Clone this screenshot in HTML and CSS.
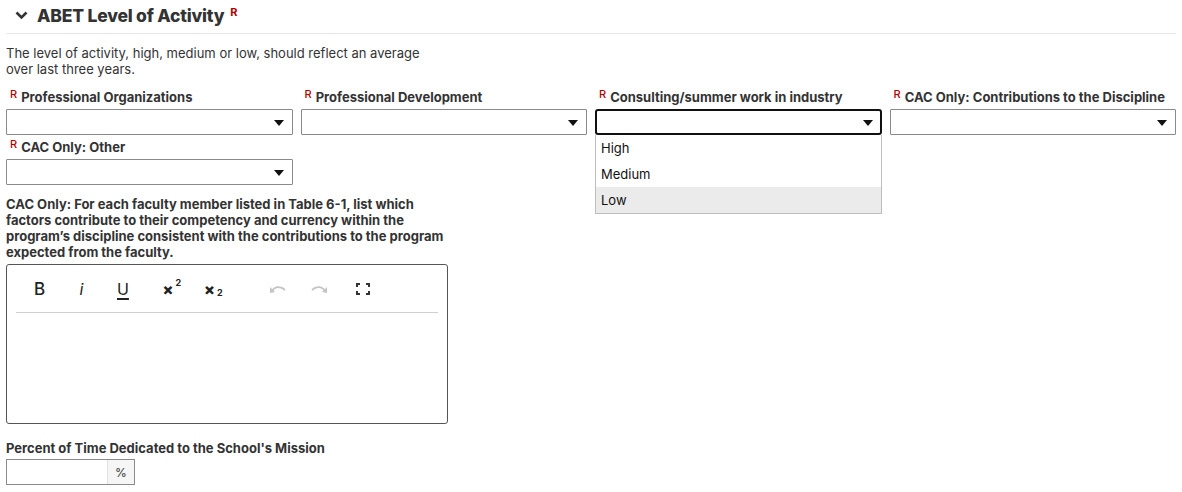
FILE: index.html
```html
<!DOCTYPE html>
<html>
<head>
<meta charset="utf-8">
<link rel="stylesheet" href="styles.css">
</head>
<body>
<div class="page">
  <div class="section-head">
    <svg class="chev" width="13" height="9" viewBox="0 0 13 9"><path d="M1.5 1.5 L6.5 6.5 L11.5 1.5" fill="none" stroke="#333" stroke-width="2.6"/></svg>
    <span class="title">ABET Level of Activity</span><sup class="req big">R</sup>
  </div>
  <p class="desc">The level of activity, high, medium or low, should reflect an average over last three years.</p>
  <div class="grid">
    <div class="field">
      <label class="lbl"><sup class="req">R</sup>Professional Organizations</label>
      <div class="select"><span class="caret"></span></div>
    </div>
    <div class="field">
      <label class="lbl"><sup class="req">R</sup>Professional Development</label>
      <div class="select"><span class="caret"></span></div>
    </div>
    <div class="field dd-host">
      <label class="lbl"><sup class="req">R</sup>Consulting/summer work in industry</label>
      <div class="select focused"><span class="caret"></span></div>
      <ul class="dropdown">
        <li>High</li>
        <li>Medium</li>
        <li class="hover">Low</li>
      </ul>
    </div>
    <div class="field">
      <label class="lbl"><sup class="req">R</sup>CAC Only: Contributions to the Discipline</label>
      <div class="select"><span class="caret"></span></div>
    </div>
    <div class="field">
      <label class="lbl"><sup class="req">R</sup>CAC Only: Other</label>
      <div class="select"><span class="caret"></span></div>
    </div>
  </div>
  <div class="block">
    <label class="lbl long">CAC Only: For each faculty member listed in Table 6-1, list which factors contribute to their competency and currency within the program’s discipline consistent with the contributions to the program expected from the faculty.</label>
    <div class="editor">
      <div class="toolbar">
        <span class="tb b">B</span>
        <span class="tb i">i</span>
        <span class="tb u">U</span>
        <span class="tb x">×<span class="sp">2</span></span>
        <span class="tb x">×<span class="sb">2</span></span>
        <span class="tb gap"></span>
        <span class="tb ic"><svg width="18" height="10" viewBox="0 0 18 10"><path d="M3 7 C6 2 12 2 16 6" fill="none" stroke="#c4c4c4" stroke-width="1.8"/><path d="M1 3 L1 9 L6 8 Z" fill="#c4c4c4"/></svg></span>
        <span class="tb ic"><svg width="18" height="10" viewBox="0 0 18 10"><path d="M15 7 C12 2 6 2 2 6" fill="none" stroke="#c4c4c4" stroke-width="1.8"/><path d="M17 3 L17 9 L12 8 Z" fill="#c4c4c4"/></svg></span>
        <span class="tb ic"><svg width="14" height="12" viewBox="0 0 14 12"><path d="M1 4 V1 H4 M10 1 H13 V4 M13 8 V11 H10 M4 11 H1 V8" fill="none" stroke="#333" stroke-width="2"/></svg></span>
      </div>
      <div class="area"></div>
    </div>
  </div>
  <div class="block pct">
    <label class="lbl">Percent of Time Dedicated to the School's Mission</label>
    <div class="pct-input"><span class="inp"></span><span class="addon">%</span></div>
  </div>
</div>
</body>
</html>
```
FILE: styles.css
```css
* { box-sizing: border-box; }
body {
  margin: 0;
  font-family: Inter, "Noto Sans", sans-serif;
  color: #333;
  background: #fff;
}
.page { padding: 0 6px; }
.section-head {
  display: flex;
  align-items: center;
  height: 34px;
  border-bottom: 1px solid #e6e6e6;
  padding-left: 9px;
  padding-bottom: 3px;
}
.chev { margin-right: 9px; margin-top: 1px; }
.title { font-size: 17.5px; font-weight: 800; letter-spacing: -0.2px; color: #333; }
.req { color: #b30000; font-size: 11px; font-weight: 500; vertical-align: top; position: relative; top: 0; margin-right: 4px; line-height: 1; }
.req.big { font-size: 11px; font-weight: 700; margin-left: 6px; top: -3px; }
.desc {
  font-size: 13px;
  line-height: 16px;
  width: 430px;
  margin: 11px 0 0 0;
  color: #333;
}
.grid {
  display: grid;
  grid-template-columns: repeat(4, 1fr);
  column-gap: 8px;
  row-gap: 4px;
  margin-top: 12px;
}
.field { position: relative; }
.lbl {
  display: block;
  font-size: 13px;
  font-weight: 700;
  line-height: 16px;
  color: #333;
  margin-bottom: 4px;
  padding-left: 4px;
  white-space: nowrap;
}
.select {
  height: 26px;
  border: 1px solid #8a8a8a;
  border-radius: 1px;
  position: relative;
  background: #fff;
}
.select.focused { border: 2px solid #111; border-radius: 3px; }
.caret {
  position: absolute;
  right: 8px;
  top: 10px;
  width: 0; height: 0;
  border-left: 5px solid transparent;
  border-right: 5px solid transparent;
  border-top: 6px solid #111;
}
.select.focused .caret { right: 7px; top: 9px; }
.dropdown {
  position: absolute;
  left: 0; right: 0;
  top: 46px;
  margin: 0; padding: 0;
  list-style: none;
  border: 1px solid #bdbdbd;
  border-top: none;
  background: #fff;
  font-size: 13px;
  z-index: 2;
}
.dropdown li { height: 26px; line-height: 26px; padding-left: 5px; color: #111; }
.dropdown li.hover { background: #ebebeb; }
.block { width: 442px; margin-top: 11px; }
.lbl.long { white-space: normal; padding-left: 0; margin-bottom: 4px; width: 446px; }
.editor {
  border: 1px solid #555;
  border-radius: 3px;
  height: 160px;
  padding: 0 9px;
}
.toolbar {
  display: flex;
  align-items: center;
  height: 48px;
  border-bottom: 1px solid #d0d0d0;
  padding-left: 18px;
}
.tb { width: 41.5px; font-size: 17px; color: #222; display: flex; align-items: center; }
.tb.b { font-weight: 500; }
.tb.i { font-style: italic; font-size: 16px; padding-left: 4px; }
.tb.u { text-decoration: underline; text-decoration-thickness: 2px; text-underline-offset: 3px; font-size: 16px; }
.tb.x { font-size: 16px; font-weight: 800; padding-left: 4px; }
.sp { font-size: 9px; position: relative; top: -6px; margin-left: 2px; font-weight: 700; }
.sb { font-size: 9px; position: relative; top: 4px; margin-left: 2px; font-weight: 700; }
.tb.gap { width: 27px; }
.tb.ic { justify-content: flex-start; }
.tb.ic:last-child { padding-left: 4px; }
.pct { margin-top: 16px; }
.pct .lbl { padding-left: 0; margin-bottom: 3px; }
.pct-input {
  display: flex;
  width: 129px;
  height: 26px;
  border: 1px solid #8a8a8a;
}
.pct-input .inp { flex: 1; }
.pct-input .addon {
  width: 27px;
  border-left: 1px solid #e0e0e0;
  background: #f6f6f6;
  font-size: 12px;
  display: flex; align-items: center; justify-content: center;
}
```
